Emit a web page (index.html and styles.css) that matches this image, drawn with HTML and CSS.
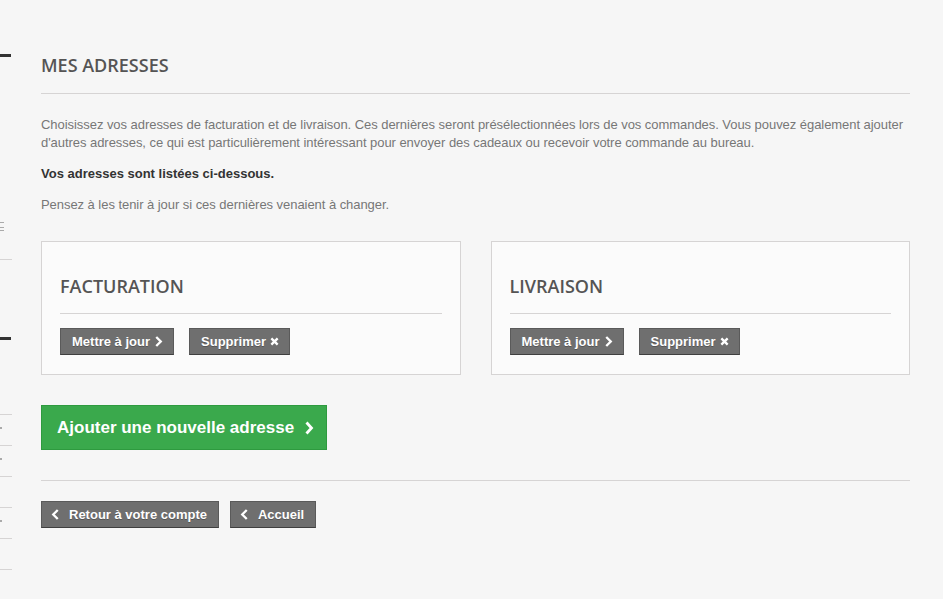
FILE: index.html
```html
<!DOCTYPE html>
<html lang="fr">
<head>
<meta charset="UTF-8" />
<meta name="viewport" content="width=device-width, initial-scale=1" />
<title>Mes adresses</title>
<link rel="stylesheet" href="styles.css">
</head>
<body>

<div class="page">
  <aside class="sidebar">
    <div class="side-bar side-bar-first"></div>
    <div class="side-glyph"></div>
    <div class="side-line"></div>
    <div class="side-bar side-bar-second"></div>
    <ul class="side-list">
      <li><span class="dot"></span></li>
      <li><span class="dot"></span></li>
      <li></li>
      <li><span class="dot"></span></li>
      <li></li>
      <li></li>
    </ul>
  </aside>

  <main class="content">
    <h1 class="page-heading">Mes adresses</h1>

    <p class="info">Choisissez vos adresses de facturation et de livraison. Ces dernières seront présélectionnées lors de vos commandes. Vous pouvez également ajouter d'autres adresses, ce qui est particulièrement intéressant pour envoyer des cadeaux ou recevoir votre commande au bureau.</p>
    <p class="info-strong">Vos adresses sont listées ci-dessous.</p>
    <p class="info">Pensez à les tenir à jour si ces dernières venaient à changer.</p>

    <div class="addresses">
      <div class="address">
        <h3 class="address-title">Facturation</h3>
        <div class="address-actions">
          <a class="btn" href="#">Mettre à jour
            <svg class="ico" viewBox="0 0 10 12" width="9" height="11"><path d="M2.5 1 L7.5 6 L2.5 11" fill="none" stroke="#fff" stroke-width="2.6"/></svg>
          </a>
          <a class="btn" href="#">Supprimer
            <svg class="ico" viewBox="0 0 10 10" width="9" height="9"><path d="M1.5 1.5 L8.5 8.5 M8.5 1.5 L1.5 8.5" fill="none" stroke="#fff" stroke-width="2.6"/></svg>
          </a>
        </div>
      </div>
      <div class="address">
        <h3 class="address-title">Livraison</h3>
        <div class="address-actions">
          <a class="btn" href="#">Mettre à jour
            <svg class="ico" viewBox="0 0 10 12" width="9" height="11"><path d="M2.5 1 L7.5 6 L2.5 11" fill="none" stroke="#fff" stroke-width="2.6"/></svg>
          </a>
          <a class="btn" href="#">Supprimer
            <svg class="ico" viewBox="0 0 10 10" width="9" height="9"><path d="M1.5 1.5 L8.5 8.5 M8.5 1.5 L1.5 8.5" fill="none" stroke="#fff" stroke-width="2.6"/></svg>
          </a>
        </div>
      </div>
    </div>

    <a class="btn-add" href="#">Ajouter une nouvelle adresse
      <svg class="ico-lg" viewBox="0 0 10 14" width="10" height="14"><path d="M2.5 1.5 L7.5 7 L2.5 12.5" fill="none" stroke="#fff" stroke-width="2.8"/></svg>
    </a>

    <div class="footer-links">
      <a class="btn btn-back" href="#">
        <svg class="ico" viewBox="0 0 10 12" width="9" height="11"><path d="M7.5 1 L2.5 6 L7.5 11" fill="none" stroke="#fff" stroke-width="2.6"/></svg>
        Retour à votre compte</a>
      <a class="btn btn-back" href="#">
        <svg class="ico" viewBox="0 0 10 12" width="9" height="11"><path d="M7.5 1 L2.5 6 L7.5 11" fill="none" stroke="#fff" stroke-width="2.6"/></svg>
        Accueil</a>
    </div>
  </main>
</div>

</body>
</html>
```

FILE: styles.css
```css
body {
  margin: 0;
  background: #f6f6f6;
  font-family: Arial, "Liberation Sans", sans-serif;
  font-size: 13px;
  color: #777;
}
.page {
  display: flex;
  gap: 29px;
}
.sidebar {
  width: 12px;
  overflow: hidden;
  flex-shrink: 0;
}
.side-bar {
  height: 3px;
  width: 11px;
  background: #333;
}
.side-bar-first {
  margin-top: 54px;
}
.side-glyph {
  margin-top: 165px;
  width: 4px;
  height: 9px;
  border-top: 1px solid #aaa;
  border-bottom: 1px solid #aaa;
  box-sizing: border-box;
  background: linear-gradient(#aaa, #aaa) 0 4px / 4px 1px no-repeat;
}
.side-line {
  margin-top: 28px;
  height: 1px;
  width: 12px;
  background: #d6d4d4;
}
.side-bar-second {
  margin-top: 77px;
}
.side-list {
  list-style: none;
  margin: 74px 0 0;
  padding: 0;
}
.side-list li {
  height: 30px;
  border-top: 1px solid #d6d4d4;
}
.side-list .dot {
  display: block;
  margin-top: 12px;
  width: 2px;
  height: 2px;
  background: #aaa;
}
.content {
  width: 869px;
  padding-top: 53px;
}
.page-heading {
  margin: 0 0 22px;
  padding-bottom: 16px;
  border-bottom: 1px solid #d6d4d4;
  font-family: "Open Sans", sans-serif;
  font-weight: 600;
  font-size: 18px;
  line-height: 24px;
  color: #555454;
  text-transform: uppercase;
}
.info {
  margin: 0 0 13px;
  line-height: 18px;
  letter-spacing: -0.05px;
}
.info-strong {
  margin: 0 0 13px;
  line-height: 18px;
  font-weight: bold;
  color: #333;
}
.addresses {
  display: flex;
  gap: 30px;
  margin-top: 27px;
}
.address {
  flex: 1;
  background: #fbfbfb;
  border: 1px solid #d6d4d4;
  padding: 32px 18px 19px;
}
.address-title {
  margin: 0 0 14px;
  padding-bottom: 15px;
  border-bottom: 1px solid #d6d4d4;
  font-family: "Open Sans", sans-serif;
  font-weight: 600;
  font-size: 18px;
  line-height: 24px;
  color: #555454;
  text-transform: uppercase;
}
.address-actions {
  display: flex;
  gap: 15px;
}
.btn {
  display: inline-flex;
  align-items: center;
  gap: 4px;
  height: 27px;
  box-sizing: border-box;
  padding: 0 10px 0 11px;
  background: #6f6f6f;
  border: 1px solid #5a5a5a;
  border-bottom-color: #3f3f3f;
  color: #fff;
  font-weight: bold;
  font-size: 13px;
  text-decoration: none;
  text-shadow: 0 1px #555;
}
.ico {
  display: block;
}
.btn-add {
  display: inline-flex;
  align-items: center;
  gap: 10px;
  height: 45px;
  box-sizing: border-box;
  margin-top: 30px;
  padding: 0 12px 0 15px;
  background: #3aa94c;
  border: 1px solid #2e9a3f;
  color: #fff;
  font-weight: bold;
  font-size: 17px;
  text-decoration: none;
}
.footer-links {
  display: flex;
  gap: 11px;
  margin-top: 30px;
  padding-top: 20px;
  border-top: 1px solid #d6d4d4;
}
.btn-back {
  padding: 0 11px 0 9px;
  gap: 9px;
}
```
